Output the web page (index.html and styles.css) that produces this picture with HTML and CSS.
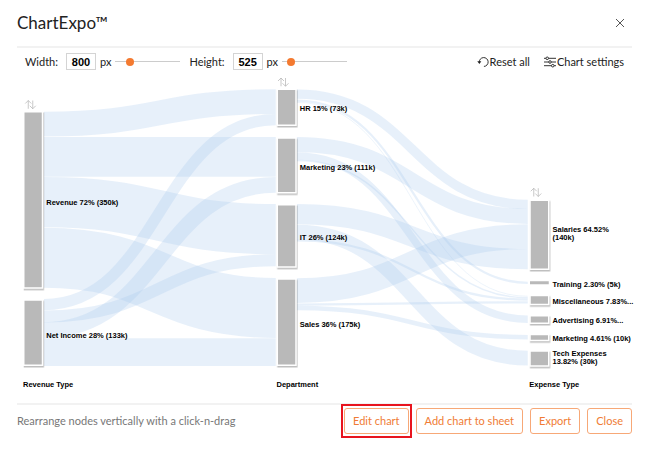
FILE: index.html
```
<!DOCTYPE html>
<html lang="en">
<head>
    <meta charset="UTF-8">
    <meta name="viewport" content="width=device-width, initial-scale=1.0">
    <title>ChartExpo</title>
    <link rel="stylesheet" href="styles.css">
</head>
<body>
    <header class="header">
        <h1>ChartExpo™</h1>
        <button class="icon-btn" aria-label="Close dialog">
            <svg width="10" height="10" viewBox="0 0 10 10"><path d="M1 1l8 8M9 1l-8 8"/></svg>
        </button>
    </header>
    <div class="toolbar">
        <div class="size">
            <label for="width">Width:</label>
            <input class="num" id="width" type="text" value="800">
            <span>px</span>
            <input class="slider" type="range" min="0" max="100" value="18" aria-label="Chart width">
        </div>
        <div class="size">
            <label for="height">Height:</label>
            <input class="num" id="height" type="text" value="525">
            <span>px</span>
            <input class="slider" type="range" min="0" max="100" value="9" aria-label="Chart height">
        </div>
        <div class="tools">
            <button class="tool">
                <svg width="12" height="12" viewBox="0 0 13 12"><path d="M2.5 6.5a4.8 4.8 0 1 1 5 4.3"/><path class="solid" d="M.3 5.3h4.4l-2.1 3z"/></svg>
                Reset all
            </button>
            <button class="tool">
                <svg width="12" height="12" viewBox="0 0 13 12"><path d="M0 2h2M5 2h8M0 6h5M8 6h5M0 10h8M11 10h2"/><circle cx="3.5" cy="2" r="1.4"/><circle cx="6.5" cy="6" r="1.4"/><circle cx="9.5" cy="10" r="1.4"/></svg>
                Chart settings
            </button>
        </div>
    </div>
    <main>
        <svg class="chart" viewBox="0 0 820 432" role="img" aria-label="Sankey chart of revenue by department and expense type">
            <g class="links">
                <path stroke-width="33" d="M36 65.5C190 65.5 190 35.5 345 35.5"/>
                <path stroke-width="53" d="M36 109H345"/>
                <path stroke-width="67" d="M36 169.5C190 169.5 190 205.5 345 205.5"/>
                <path stroke-width="80" d="M36 243.5C190 243.5 190 310.5 345 310.5"/>
                <path stroke-width="15" d="M36 306C190 306 190 59.5 345 59.5"/>
                <path stroke-width="16" d="M36 322C190 322 190 247 345 247"/>
                <path stroke-width="21" d="M36 340C190 340 190 146.5 345 146.5"/>
                <path stroke-width="37" d="M36 369.5H345"/>
                <path stroke-width="12.5" d="M373 25.5C527 25.5 527 172.5 681 172.5"/>
                <path stroke-width="3" d="M373 34C527 34 527 277 681 277"/>
                <path stroke-width="1" d="M373 36.5C527 36.5 527 295 681 295"/>
                <path stroke-width="20" d="M373 92.5C527 92.5 527 188.5 681 188.5"/>
                <path stroke-width="10" d="M373 108C527 108 527 325.5 681 325.5"/>
                <path stroke-width="2" d="M373 114C527 114 527 297 681 297"/>
                <path stroke-width="27" d="M373 185.5C527 185.5 527 245.5 681 245.5"/>
                <path stroke-width="19.5" d="M373 209.5C527 209.5 527 377.5 681 377.5"/>
                <path stroke-width="3" d="M373 220.5C527 220.5 527 299.5 681 299.5"/>
                <path stroke-width="33" d="M373 287.5C527 287.5 527 215.5 681 215.5"/>
                <path stroke-width="3" d="M373 306C527 306 527 303 681 303"/>
                <path stroke-width="6" d="M373 310.5C527 310.5 527 349.5 681 349.5"/>
            </g>
            <g class="nodes">
                <rect x="9" y="49" width="25" height="235"/>
                <rect x="9" y="300" width="25" height="87"/>
                <rect x="347" y="19" width="25" height="48"/>
                <rect x="347" y="84" width="25" height="73"/>
                <rect x="347" y="173" width="25" height="83"/>
                <rect x="347" y="272" width="25" height="115"/>
                <rect x="684" y="167" width="25" height="92"/>
                <rect class="thin" x="684" y="275" width="25" height="4"/>
                <rect x="684" y="294" width="25" height="12"/>
                <rect x="684" y="321" width="25" height="10"/>
                <rect x="684" y="346" width="25" height="8"/>
                <rect x="684" y="368" width="25" height="20"/>
            </g>
            <g class="sort">
                <path d="M15 45V34M11 38l4-4 4 4M21 34v11M17 41l4 4 4-4"/>
                <path d="M352 15V4M348 8l4-4 4 4M358 4v11M354 11l4 4 4-4"/>
                <path d="M689 162V151M685 155l4-4 4 4M695 151v11M691 158l4 4 4-4"/>
            </g>
            <g class="labels">
                <text x="39" y="173">Revenue 72% (350k)</text>
                <text x="39" y="350">Net Income 28% (133k)</text>
                <text x="377" y="48">HR 15% (73k)</text>
                <text x="377" y="126">Marketing 23% (111k)</text>
                <text x="377" y="220">IT 26% (124k)</text>
                <text x="377" y="336">Sales 36% (175k)</text>
                <text x="714" y="209">Salaries 64.52%</text>
                <text x="714" y="220">(140k)</text>
                <text x="714" y="282">Training 2.30% (5k)</text>
                <text x="714" y="305">Miscellaneous 7.83%...</text>
                <text x="714" y="331">Advertising 6.91%...</text>
                <text x="714" y="355">Marketing 4.61% (10k)</text>
                <text x="714" y="375">Tech Expenses</text>
                <text x="714" y="385">13.82% (30k)</text>
                <text x="8" y="416">Revenue Type</text>
                <text x="346" y="416">Department</text>
                <text x="683" y="416">Expense Type</text>
            </g>
        </svg>
    </main>
    <footer class="footer">
        <p>Rearrange nodes vertically with a click-n-drag</p>
        <button class="btn marked">Edit chart</button>
        <button class="btn">Add chart to sheet</button>
        <button class="btn">Export</button>
        <button class="btn">Close</button>
    </footer>
</body>
</html>
```

FILE: styles.css
```
*{margin: 0;padding: 0;box-sizing: border-box;}
body{
    min-height: 100vh;
    padding: 0 18px 20px 17px;
    font: 11px/16px Lato, "Open Sans", sans-serif;
    color: #222222;
    background: #ffffff;
}
button{
    font: inherit;
    color: inherit;
    background: none;
    border: none;
    cursor: pointer;
}
.header{
    display: flex;
    justify-content: space-between;
    align-items: center;
    height: 48px;
    padding-right: 7px;
    border-bottom: 2px solid #f2f2f2;
}
.header h1{
    font: 17px/24px Lato, sans-serif;
}
.icon-btn{
    display: flex;
}
.icon-btn svg{
    fill: none;
    stroke: #555555;
}
.toolbar{
    display: flex;
    align-items: center;
    gap: 9px;
    height: 27px;
    padding: 0 8px;
}
.size{
    display: flex;
    align-items: center;
    gap: 4px;
}
.size label{
    margin-right: 4px;
}
.num{
    width: 30px;
    height: 17px;
    border: 1px solid #d4d4d4;
    font: bold 11px/15px "Liberation Sans", Arial, sans-serif;
    color: #000000;
    text-align: center;
}
.slider{
    appearance: none;
    width: 65px;
    height: 8px;
    background: linear-gradient(#cccccc, #cccccc) center / 100% 1px no-repeat;
}
.slider::-webkit-slider-thumb{
    appearance: none;
    width: 8px;
    height: 8px;
    border-radius: 50%;
    background: #f47a30;
}
.tools{
    display: flex;
    gap: 14px;
    margin-left: auto;
}
.tool{
    display: flex;
    align-items: center;
    gap: 1px;
}
.tool svg{
    fill: none;
    stroke: #222222;
}
.tool .solid{
    fill: #222222;
    stroke: none;
}
.chart{
    display: block;
    width: 100%;
    overflow: visible;
}
.links{
    fill: none;
    stroke: #a8c8ec;
    stroke-opacity: 0.28;
}
.nodes rect{
    fill: #b9b9b9;
    stroke: #ffffff;
    stroke-width: 2;
    filter: drop-shadow(1px 2px 1px rgba(0, 0, 0, 0.25));
}
.nodes .thin{
    stroke: none;
    filter: none;
}
.sort{
    fill: none;
    stroke: #b5b5b5;
}
.labels{
    font: bold 10px "Liberation Sans", Arial, sans-serif;
    fill: #000000;
}
.footer{
    display: flex;
    align-items: center;
    gap: 7px;
    margin-top: 4px;
    padding-top: 3px;
    border-top: 2px solid #f2f2f2;
}
.footer p{
    flex: 1;
    color: #777777;
}
.btn{
    height: 26px;
    padding: 0 8px;
    border: 1px solid #f7a877;
    border-radius: 3px;
    color: #f07c35;
}
.marked{
    position: relative;
}
/* square highlight frame around the button */
.marked::after{
    content: "";
    position: absolute;
    inset: -5px -4px;
    border: 2px solid #e8141e;
}
```
